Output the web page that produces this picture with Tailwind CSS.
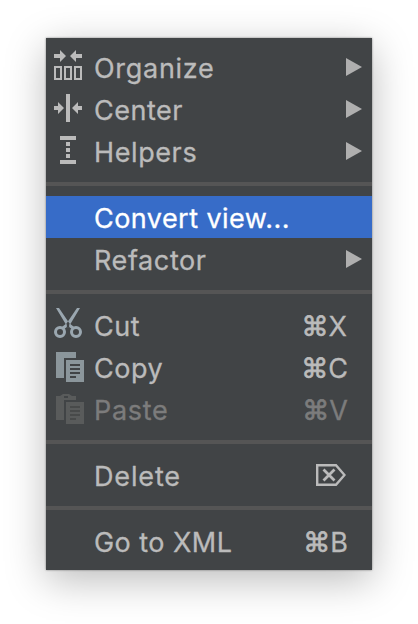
<!DOCTYPE html>
<html lang="en"><head><meta charset="utf-8"><title>Context menu</title>
<script src="https://cdn.jsdelivr.net/npm/@tailwindcss/browser@4"></script></head>
<body class="bg-white w-[418px] h-[624px] overflow-hidden pl-[46px] pt-[38px] font-['Inter',sans-serif] text-[27px] leading-[42px] text-[#bbbbbb]">
<div role="menu" class="w-[326px] h-[532px] bg-[#414446] pt-2 pb-2 shadow-[0_0_2px_rgba(0,0,0,0.45),0_10px_38px_rgba(0,0,0,0.27)] whitespace-nowrap [-webkit-text-stroke:0.3px_currentColor]">
  <div class="flex h-[42px] pl-2 pr-[10px] items-center">
    <svg class="w-10 h-[42px] shrink-0" viewBox="0 0 40 42" fill="#bbb"><path d="M0 8h6V4l6 6-6 6v-4H0zM28 8h-6V4l-6 6 6 6v-4h6z"/><path fill="none" stroke="#bbb" stroke-width="2" d="M1 21h6v12H1zM11 21h6v12h-6zM21 21h6v12h-6z"/></svg>
    <span class="pt-1 tracking-[0.7px]">Organize</span><svg class="ml-auto w-4 h-[18px]" viewBox="0 0 16 18"><path fill="#afafaf" d="M0 0l16 9L0 18z"/></svg>
  </div>
  <div class="flex h-[42px] pl-2 pr-[10px] items-center">
    <svg class="w-10 h-[42px] shrink-0" viewBox="0 0 40 42" fill="#bbb"><path d="M12 6h4v28h-4zM0 18h4v-4l6 6-6 6v-4H0zM28 18h-4v-4l-6 6 6 6v-4h4z"/></svg>
    <span class="pt-1 tracking-[0.5px]">Center</span><svg class="ml-auto w-4 h-[18px]" viewBox="0 0 16 18"><path fill="#afafaf" d="M0 0l16 9L0 18z"/></svg>
  </div>
  <div class="flex h-[42px] pl-2 pr-[10px] items-center">
    <svg class="w-10 h-[42px] shrink-0" viewBox="0 0 40 42" fill="#bbb"><path d="M6 6h16v4H6zM6 30h16v4H6zM12 12h4v4h-4zM12 18h4v4h-4zM12 24h4v4h-4z"/></svg>
    <span class="pt-1 tracking-[0.6px]">Helpers</span><svg class="ml-auto w-4 h-[18px]" viewBox="0 0 16 18"><path fill="#afafaf" d="M0 0l16 9L0 18z"/></svg>
  </div>
  <div class="h-1 my-[10px] bg-[#555555]"></div>
  <div class="flex h-[42px] pl-12 items-center bg-[#376cc8] text-white"><span class="pt-1 tracking-[0.45px]">Convert view...</span></div>
  <div class="flex h-[42px] pl-12 pr-[10px] items-center"><span class="pt-1 tracking-[0.6px]">Refactor</span><svg class="ml-auto w-4 h-[18px]" viewBox="0 0 16 18"><path fill="#afafaf" d="M0 0l16 9L0 18z"/></svg></div>
  <div class="h-1 my-[10px] bg-[#555555]"></div>
  <div class="flex h-[42px] pl-2 pr-[25px] items-center">
    <svg class="w-10 h-[42px] shrink-0" viewBox="0 0 40 42" fill="none" stroke="#9aa7b0"><path fill="#9aa7b0" stroke="none" d="M2 4h3l11.500 17-2.500 3zM26 4h-3L11.500 21l2.500 3z"/><circle cx="6" cy="28" r="4.500" stroke-width="3"/><circle cx="22" cy="28" r="4.500" stroke-width="3"/><path stroke-width="3" d="M9 24l4-3M19 24l-4-3"/><circle cx="14" cy="22" r="1.300" fill="#414446" stroke="none"/></svg>
    <span class="pt-1 tracking-[0.5px]">Cut</span><span class="ml-auto flex pt-1"><span class="font-['DejaVu_Sans'] [-webkit-text-stroke:0.7px_currentColor]">⌘</span><span>X</span></span>
  </div>
  <div class="flex h-[42px] pl-2 pr-6 items-center">
    <svg class="w-10 h-[42px] shrink-0" viewBox="0 0 40 42"><path fill="#8b969b" d="M2 6h20v6H10v20H2z"/><path fill="#8b969b" d="M12 14h18v22H12z"/><path fill="#414446" d="M16 18h10v2H16zM16 22h10v2H16zM16 26h10v2H16zM16 30h6v2h-6z"/></svg>
    <span class="pt-1 tracking-[0.5px]">Copy</span><span class="ml-auto flex pt-1"><span class="font-['DejaVu_Sans'] [-webkit-text-stroke:0.7px_currentColor]">⌘</span><span>C</span></span>
  </div>
  <div class="flex h-[42px] pl-2 pr-6 items-center text-[#7c7c7c]">
    <svg class="w-10 h-[42px] shrink-0" viewBox="0 0 40 42"><path fill="#595b5b" d="M2 8h4l3-2h6l3 2h4v4H10v20H2z"/><path fill="#414446" d="M10 8h4v2h-4z"/><path fill="#595b5b" d="M12 14h18v22H12z"/><path fill="#484a4a" d="M16 18h10v2H16zM16 22h10v2H16zM16 26h10v2H16zM16 30h6v2h-6z"/></svg>
    <span class="pt-1 tracking-[0.7px]">Paste</span><span class="ml-auto flex pt-1"><span class="font-['DejaVu_Sans'] [-webkit-text-stroke:0.7px_currentColor]">⌘</span><span>V</span></span>
  </div>
  <div class="h-1 my-[10px] bg-[#555555]"></div>
  <div class="flex h-[42px] pl-12 pr-[26px] items-center"><span class="pt-1 tracking-[0.85px]">Delete</span>
    <svg class="ml-auto w-[30px] h-[22px]" viewBox="0 0 30 22" fill="none" stroke="#bbb" stroke-width="2.400"><path d="M1.200 1.200h18.800l8.500 9.800L20 20.800H1.200z"/><path stroke-width="2.800" d="M7.500 5.500l11 11M18.500 5.500l-11 11"/></svg></div>
  <div class="h-1 my-[10px] bg-[#555555]"></div>
  <div class="flex h-[42px] pl-12 pr-6 items-center"><span class="pt-1 tracking-[0.45px]">Go to XML</span><span class="ml-auto flex pt-1"><span class="font-['DejaVu_Sans'] [-webkit-text-stroke:0.7px_currentColor]">⌘</span><span>B</span></span></div>
</div>
</body></html>
